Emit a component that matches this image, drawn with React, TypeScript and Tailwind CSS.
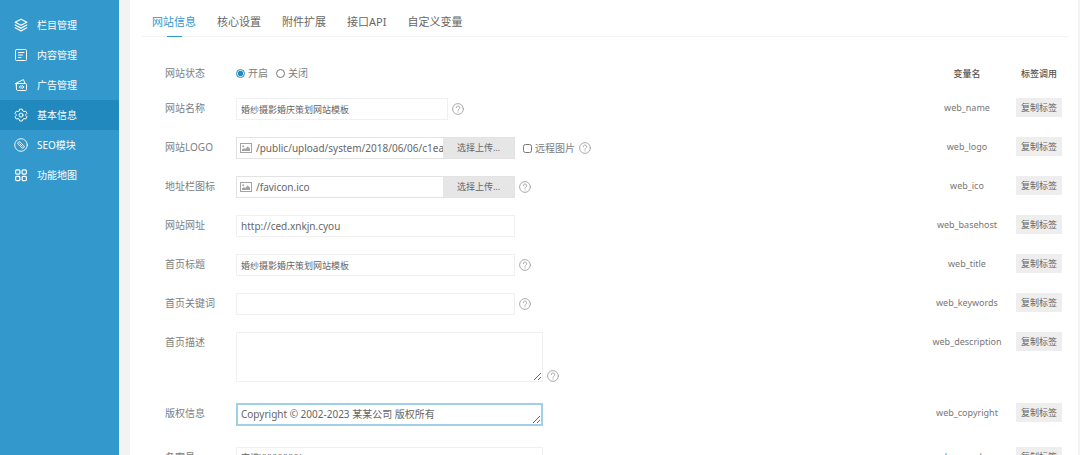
import { useId } from "react";
import type { ReactNode } from "react";

type IconProps = { children: ReactNode };

function NavIcon({ children }: IconProps) {
  return (
    <svg
      aria-hidden="true"
      viewBox="0 0 14 14"
      className="size-3.5 shrink-0"
      fill="none"
      stroke="currentColor"
      strokeWidth="1"
      strokeLinecap="round"
      strokeLinejoin="round"
    >
      {children}
    </svg>
  );
}

const navItems: { label: string; icon: ReactNode; active?: boolean }[] = [
  {
    label: "栏目管理",
    icon: (
      <>
        <path d="M7 1.2 12.8 4.2 7 7.2 1.2 4.2Z" strokeWidth="1.2" />
        <path d="M1.2 7 7 10.100 12.800 7" strokeWidth="1.2" />
        <path d="M1.2 9.800 7 12.900 12.800 9.800" strokeWidth="1.2" />
      </>
    ),
  },
  {
    label: "内容管理",
    icon: (
      <>
        <rect x="1.5" y="1.5" width="11" height="11" rx="1" />
        <path d="M4.500 4.500h5.500M4.500 7h4M4.500 9.500h2.500" />
      </>
    ),
  },
  {
    label: "广告管理",
    icon: (
      <>
        <path d="M2.500 5.500h9a1 1 0 0 1 1 1v5a1 1 0 0 1-1 1h-8a1 1 0 0 1-1-1Z" />
        <path d="M1.200 5.600 9.400 1.600l1.600 3.700M2.500 5.500v2" />
        <path d="M6.800 7.600 5.400 9l1.400 1.400M8.600 7.600 10 9l-1.400 1.400M7.200 9h1" />
      </>
    ),
  },
  {
    label: "基本信息",
    active: true,
    icon: (
      <>
        <path d="M5.700 1.200h2.600l.500 1.700 1.200.700 1.700-.400 1.300 2.200-1.200 1.200v1l1.200 1.200-1.300 2.200-1.700-.400-1.200.700-.500 1.700H5.700l-.500-1.700-1.200-.700-1.700.400L1 8.800l1.200-1.200v-1L1 5.400l1.300-2.200 1.700.400 1.200-.700Z" />
        <circle cx="7" cy="7.100" r="2" />
      </>
    ),
  },
  {
    label: "SEO模块",
    icon: (
      <>
        <circle cx="7" cy="7" r="6.300" strokeWidth="0.9" />
        <path
          d="M7.400 5.300 6.200 4.100a1.500 1.500 0 0 0-2.100 2.100l2 2M6.600 8.700l1.200 1.200a1.500 1.500 0 0 0 2.100-2.100l-2-2M5.800 5.800l2.400 2.400"
          strokeWidth="0.9"
        />
      </>
    ),
  },
  {
    label: "功能地图",
    icon: (
      <g strokeWidth="1.200">
        <rect x="1.600" y="1.800" width="4.300" height="4.300" rx="1.200" />
        <rect x="8.100" y="1.800" width="4.300" height="4.300" rx="1.200" />
        <rect x="1.600" y="8.300" width="4.300" height="4.300" rx="1.200" />
        <rect x="8.100" y="8.300" width="4.300" height="4.300" rx="1.200" />
      </g>
    ),
  },
];

const tabs = ["网站信息", "核心设置", "附件扩展", "接口API", "自定义变量"];

function HelpIcon() {
  return (
    <svg
      role="img"
      aria-label="?"
      viewBox="0 0 12 12"
      className="size-3 shrink-0 text-[#a3a3a3]"
      fill="none"
      stroke="currentColor"
      strokeWidth="0.9"
      strokeLinecap="round"
    >
      <circle cx="6" cy="6" r="5.400" />
      <path d="M4.300 4.700a1.700 1.700 0 1 1 2.500 1.500c-.600.300-.800.600-.800 1.200" />
      <path d="M6 8.900v.200" />
    </svg>
  );
}

function ImageIcon() {
  return (
    <svg aria-hidden="true" viewBox="0 0 12 10" className="h-2.5 w-3 shrink-0 text-[#a3a3a3]" fill="none" stroke="currentColor">
      <rect x="0.500" y="0.500" width="11" height="9" />
      <path d="M2 8V6.300l2-1 1.300.700L7.600 3.500l2.400 2V8Z" fill="currentColor" stroke="none" />
      <circle cx="3.200" cy="3.200" r="1" fill="currentColor" stroke="none" />
    </svg>
  );
}

function CopyButton() {
  return (
    <div className="flex w-12 shrink-0 justify-center">
      <button type="button" className="h-[19px] w-[46px] bg-[#eee] text-[9px] text-[#666]">
        复制标签
      </button>
    </div>
  );
}

type RowProps = {
  label: string;
  variable: string;
  help?: boolean;
  render: (id: string) => ReactNode;
  extra?: ReactNode;
  tall?: boolean;
};

function FieldRow({ label, variable, help, render, extra, tall }: RowProps) {
  const id = useId();
  return (
    <div className={tall ? "flex items-start pb-[21px]" : "flex items-start pb-[17px]"}>
      <label htmlFor={id} className="w-[71px] shrink-0 text-[10px] leading-5 text-[#808080]">
        {label}
      </label>
      <div className={tall ? "flex min-w-0 flex-1 items-end gap-1" : "flex min-w-0 flex-1 items-center gap-1"}>
        {render(id)}
        {extra}
        {help && <HelpIcon />}
      </div>
      <span className="w-24 shrink-0 text-center text-[9px] leading-5 text-[#777]">{variable}</span>
      <CopyButton />
    </div>
  );
}

function TextField({ id, value, className }: { id: string; value: string; className: string }) {
  return (
    <input
      id={id}
      type="text"
      defaultValue={value}
      className={`h-[22px] border border-[#f0f0f0] px-1 text-[#666] outline-none ${className}`}
    />
  );
}

function UploadField({ id, value }: { id: string; value: string }) {
  return (
    <div className="flex h-[22px] w-[279px] items-center border border-[#e3e3e3] pl-[3px]">
      <ImageIcon />
      <input id={id} type="text" defaultValue={value} className="ml-1 h-full min-w-0 flex-1 text-[10px] text-[#666] outline-none" />
      <button type="button" className="h-full w-[71px] shrink-0 bg-[#e6e6e6] text-[9px] text-[#666]">
        选择上传...
      </button>
    </div>
  );
}

export default function App() {
  return (
    <div className="flex h-screen overflow-hidden bg-[#f3f3f3] font-['Noto_Sans','Noto_Sans_CJK_SC',sans-serif]">
      <nav className="w-[119px] shrink-0 bg-[#3398cc] pt-[10px]">
        {navItems.map((item) => (
          <a
            key={item.label}
            href="#"
            aria-current={item.active ? "page" : undefined}
            className={
              item.active
                ? "flex h-[30px] items-center gap-[9px] bg-[#2189be] pl-[14px] text-[10px] text-white"
                : "flex h-[30px] items-center gap-[9px] pl-[14px] text-[10px] text-white"
            }
          >
            <NavIcon>{item.icon}</NavIcon>
            {item.label}
          </a>
        ))}
      </nav>

      <main className="mr-0.5 ml-[11px] min-w-0 flex-1 bg-white pr-2.5 pl-3">
        <div className="flex h-[37px] gap-[21px] border-b border-[#f3f3f3] pl-2.5">
          {tabs.map((tab, i) => (
            <a
              key={tab}
              href="#"
              className={
                i === 0
                  ? "-mb-px flex flex-col items-center justify-between pt-3 text-[11px] leading-5 text-[#3398cc]"
                  : "pt-3 text-[11px] leading-5 text-[#666]"
              }
            >
              {tab}
              {i === 0 && <span className="h-px w-[15px] bg-[#3398cc]" />}
            </a>
          ))}
        </div>

        <form className="pt-[26px] pr-[5px] pl-[23px]">
          <div className="flex h-[35px] items-start">
            <span className="w-[71px] shrink-0 text-[10px] leading-5 text-[#808080]">网站状态</span>
            <div className="flex flex-1 gap-2 text-[10px] leading-5 text-[#808080]">
              <label className="flex items-center gap-[3px]">
                <input type="radio" name="status" defaultChecked className="size-[9px] accent-[#2189be]" />
                开启
              </label>
              <label className="flex items-center gap-[3px]">
                <input type="radio" name="status" className="size-[9px]" />
                关闭
              </label>
            </div>
            <span className="w-24 shrink-0 text-center text-[9px] leading-[22px] font-medium text-[#555]">变量名</span>
            <span className="w-12 shrink-0 text-center text-[9px] leading-[22px] font-medium text-[#555]">标签调用</span>
          </div>

          <FieldRow
            label="网站名称"
            variable="web_name"
            help
            render={(id) => <TextField id={id} value="婚纱摄影婚庆策划网站模板" className="w-[212px] text-[9px]" />}
          />
          <FieldRow
            label="网站LOGO"
            variable="web_logo"
            help
            render={(id) => <UploadField id={id} value="/public/upload/system/2018/06/06/c1eace9a.png" />}
            extra={
              <label className="ml-1 flex items-center gap-[3px] text-[10px] leading-5 text-[#808080]">
                <input type="checkbox" className="size-[9px]" />
                远程图片
              </label>
            }
          />
          <FieldRow label="地址栏图标" variable="web_ico" help render={(id) => <UploadField id={id} value="/favicon.ico" />} />
          <FieldRow
            label="网站网址"
            variable="web_basehost"
            render={(id) => <TextField id={id} value="http://ced.xnkjn.cyou" className="w-[279px] text-[10px]" />}
          />
          <FieldRow
            label="首页标题"
            variable="web_title"
            help
            render={(id) => <TextField id={id} value="婚纱摄影婚庆策划网站模板" className="w-[279px] text-[9px]" />}
          />
          <FieldRow
            label="首页关键词"
            variable="web_keywords"
            help
            render={(id) => <TextField id={id} value="" className="w-[279px] text-[9px]" />}
          />
          <FieldRow
            label="首页描述"
            variable="web_description"
            help
            tall
            render={(id) => <textarea id={id} className="h-[50px] w-[307px] resize border border-[#f0f0f0] p-1 text-[9px] outline-none" />}
          />
          <FieldRow
            label="版权信息"
            variable="web_copyright"
            tall
            render={(id) => (
              <textarea
                id={id}
                defaultValue="Copyright © 2002-2023 某某公司 版权所有"
                className="h-[23px] w-[307px] resize overflow-hidden border-2 border-[#a0d0e8] px-[3px] text-[10px] leading-[18px] text-[#666] outline-none"
              />
            )}
          />
          <FieldRow
            label="备案号"
            variable="web_recordnum"
            render={(id) => (
              <textarea
                id={id}
                defaultValue="京模XXXXXXXX"
                className="h-[23px] w-[307px] resize overflow-hidden border border-[#f0f0f0] px-1 text-[9px] leading-5 text-[#666] outline-none"
              />
            )}
          />
        </form>
      </main>
    </div>
  );
}
